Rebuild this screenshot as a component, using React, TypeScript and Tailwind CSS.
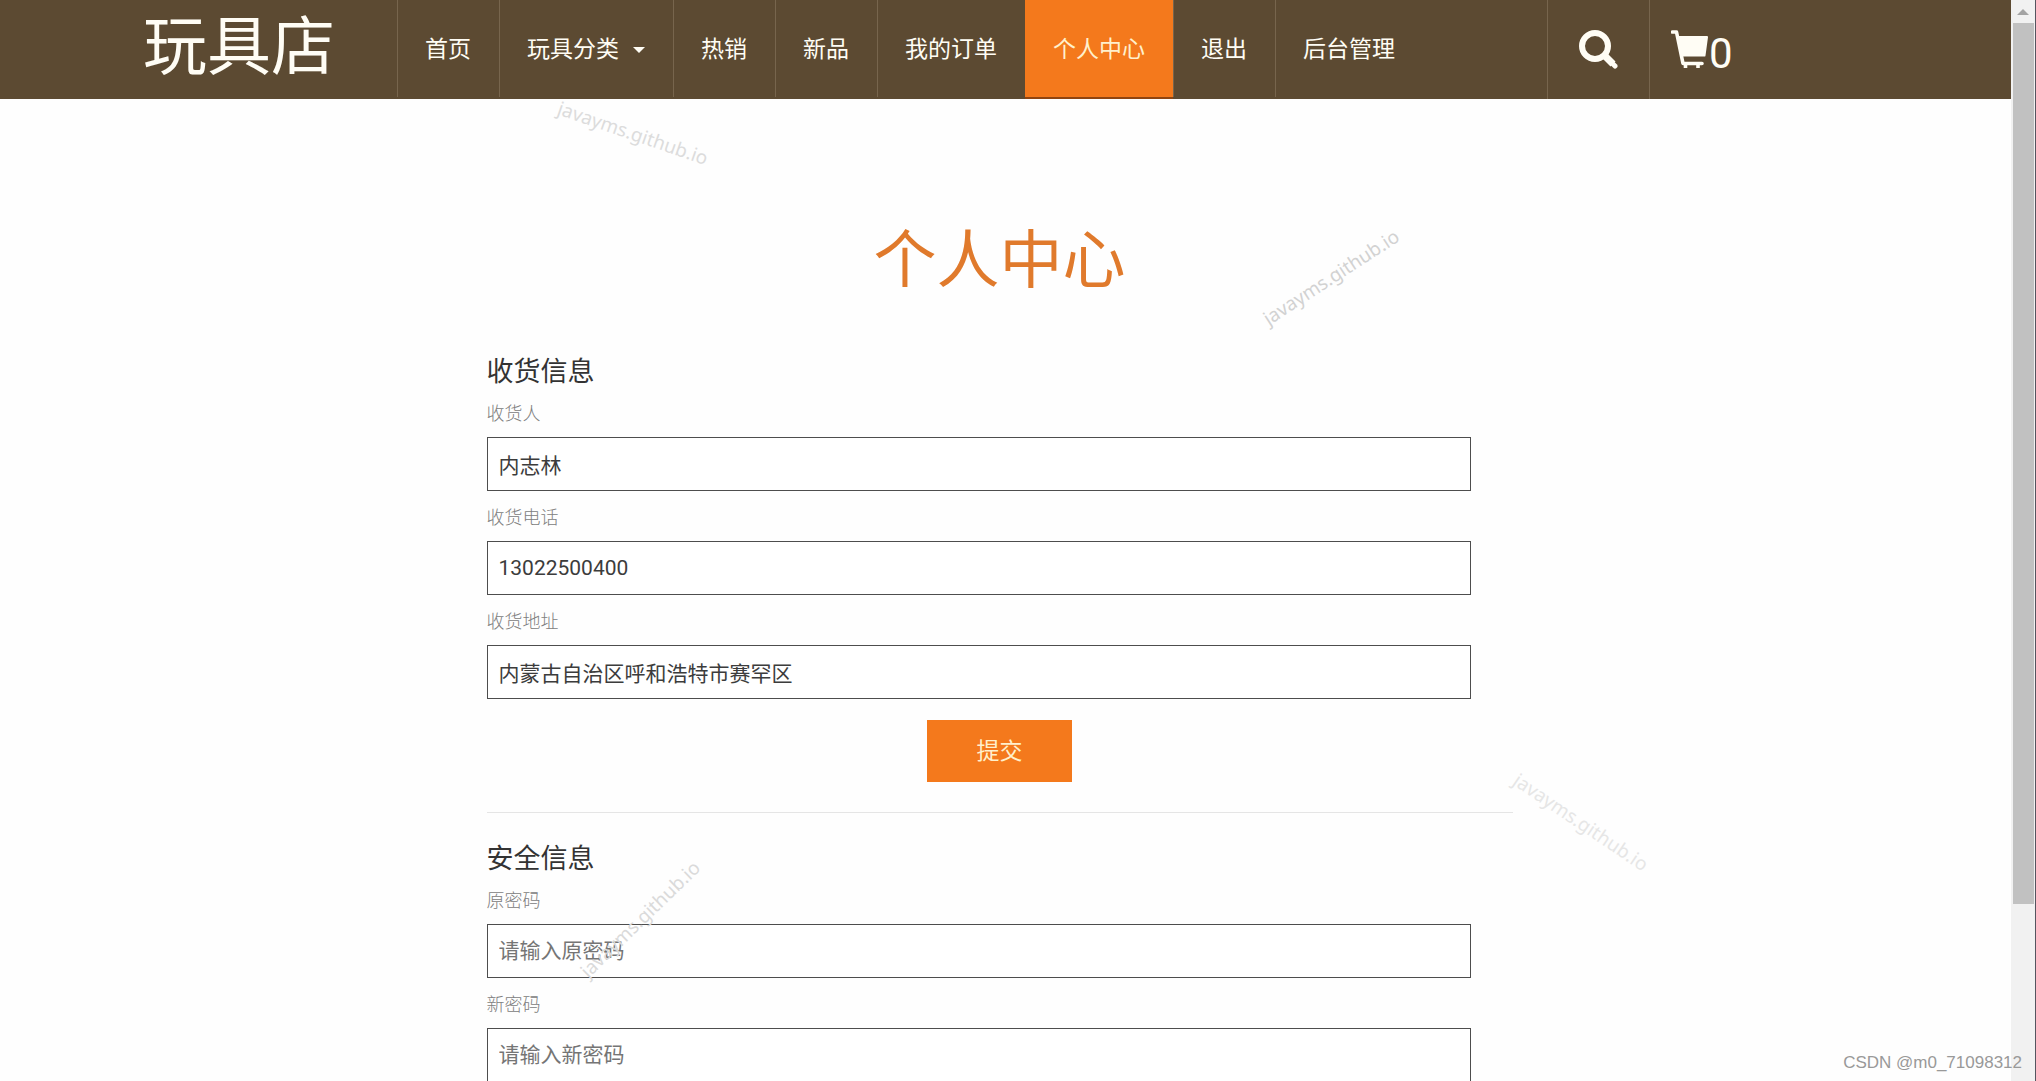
import React, { useState } from 'react';

interface NavItem {
  label: string;
  active?: boolean;
  dropdown?: boolean;
}

interface FieldProps {
  id: string;
  label: string;
  type?: string;
  placeholder?: string;
  defaultValue?: string;
}

const navItems: NavItem[] = [
  { label: '首页' },
  { label: '玩具分类', dropdown: true },
  { label: '热销' },
  { label: '新品' },
  { label: '我的订单' },
  { label: '个人中心', active: true },
  { label: '退出' },
  { label: '后台管理' },
];

const SearchIcon = () => (
  <svg viewBox="0 0 39 39" className="h-[39px] w-[39px]" aria-hidden="true">
    <circle cx="16" cy="16" r="13" fill="none" stroke="currentColor" strokeWidth="6" />
    <path d="M25 25 L34 34" stroke="currentColor" strokeWidth="7" />
    <path d="M32 32 L36 36" stroke="currentColor" strokeWidth="5" strokeLinecap="round" />
  </svg>
);

const CartIcon = () => (
  <svg viewBox="0 0 38 39" className="h-[39px] w-[38px]" fill="none" stroke="currentColor" aria-hidden="true">
    <path d="M1.500 2H5.500L12 33.500H31" strokeWidth="3.600" strokeLinecap="round" strokeLinejoin="round" />
    <path d="M7.500 7H36L33.500 25.500H11Z" fill="currentColor" strokeWidth="2" strokeLinejoin="round" />
    <path d="M14.500 34v4M27 34v4" strokeWidth="3.600" />
  </svg>
);

const Header = () => (
  <header className="flex h-[99px] shrink-0 bg-[#5c4a32] pl-[143px] text-[#fffdf5]">
    <a href="#" className="w-[254px] shrink-0 text-[64px] leading-[95px]">
      玩具店
    </a>
    <nav className="flex h-[97px] shrink-0">
      {navItems.map((item) => (
        <a
          key={item.label}
          href="#"
          className={`flex items-center border-l pr-7 pl-[27px] pt-[3px] text-[23px] ${
            item.active
              ? 'border-[#f4791c] bg-[#f4791c] text-[#fff0cc] shadow-[0_2px_0_#8f4410]'
              : 'border-[#77654d]'
          }`}
        >
          {item.label}
          {item.dropdown && (
            <span className="ml-[14px] border-x-[6px] border-t-[6px] border-x-transparent border-t-current" />
          )}
        </a>
      ))}
    </nav>
    <div className="ml-auto flex shrink-0">
      <button
        type="button"
        aria-label="搜索"
        className="flex w-[102px] items-center justify-center border-l border-[#77654d]"
      >
        <SearchIcon />
      </button>
      <a href="#" aria-label="购物车" className="flex w-[362px] items-center border-l border-[#77654d] pl-[21px]">
        <CartIcon />
        <span className="pt-2 text-[42px] leading-none">0</span>
      </a>
    </div>
  </header>
);

const Field = ({ id, label, type = 'text', placeholder, defaultValue = '' }: FieldProps) => {
  const [value, setValue] = useState(defaultValue);

  return (
    <div className="mt-[15px]">
      <label htmlFor={id} className="mb-[11px] block text-[18px] leading-6 font-light text-[#808080]">
        {label}
      </label>
      <input
        id={id}
        type={type}
        value={value}
        placeholder={placeholder}
        onChange={(e) => setValue(e.target.value)}
        className="block h-[54px] w-full border border-[#4d4d4d] bg-white px-[11px] pb-px text-[21px] text-[#3c3c3c] placeholder:text-[#757575]"
      />
    </div>
  );
};

const SectionTitle = ({ children }: { children: React.ReactNode }) => (
  <h2 className="text-[27px] leading-[30px] text-[#333]">{children}</h2>
);

const Watermark = ({ className }: { className: string }) => (
  <span
    className={`pointer-events-none absolute -translate-x-1/2 -translate-y-1/2 font-['Noto_Sans'] text-[19px] leading-6 ${className}`}
  >
    javayms.github.io
  </span>
);

const ScrollBar = () => (
  <div className="flex w-[25px] shrink-0 flex-col items-center border-r border-[#55555f] bg-[#f1f1f1]">
    <div className="flex h-[23px] items-center">
      <span className="border-x-[6px] border-b-[6px] border-x-transparent border-b-[#a3a3a3]" />
    </div>
    <div className="h-[881px] w-[21px] bg-[#c1c1c1]" />
  </div>
);

const App = () => (
  <div className="relative flex h-screen overflow-hidden bg-[#fefefe] font-[Roboto,'Noto_Sans_CJK_SC',sans-serif]">
    <div className="flex min-w-0 flex-1 flex-col">
      <Header />
      <main className="min-h-0 flex-1 overflow-hidden pr-3">
        <div className="mx-auto w-full max-w-[1026px] pt-[127px]">
          <h1 className="mb-[61px] text-center text-[63px] leading-[70px] text-[#e07a2c]">个人中心</h1>

          <form onSubmit={(e) => e.preventDefault()}>
            <SectionTitle>收货信息</SectionTitle>
            <div className="pr-[42px]">
              <Field id="name" label="收货人" defaultValue="内志林" />
              <Field id="phone" label="收货电话" defaultValue="13022500400" />
              <Field id="address" label="收货地址" defaultValue="内蒙古自治区呼和浩特市赛罕区" />
            </div>
            <button
              type="submit"
              className="mx-auto mt-[21px] block h-[62px] w-[145px] bg-[#f4791c] pt-[2px] text-[23px] text-[#fff0cc]"
            >
              提交
            </button>
          </form>

          <hr className="mt-[30px] mb-[31px] border-[#e5e5e5]" />

          <form onSubmit={(e) => e.preventDefault()}>
            <SectionTitle>安全信息</SectionTitle>
            <div className="pr-[42px]">
              <Field id="password" type="password" label="原密码" placeholder="请输入原密码" />
              <Field id="password-new" type="password" label="新密码" placeholder="请输入新密码" />
            </div>
          </form>
        </div>
      </main>
    </div>
    <ScrollBar />

    <Watermark className="top-[133px] left-[633px] rotate-[19deg] text-[#dcdcdc]" />
    <Watermark className="top-[277px] left-[1331px] -rotate-[33deg] text-[#d2d2d2]" />
    <Watermark className="top-[822px] left-[1581px] rotate-[34deg] text-[#e6e6e6]" />
    <Watermark className="top-[919px] left-[640px] -rotate-[44deg] text-[#dadada]" />
    <span className="pointer-events-none absolute right-[14px] bottom-[6px] font-['Liberation_Sans'] text-[17px] leading-6 text-[#999]">
      CSDN @m0_71098312
    </span>
  </div>
);

export default App;
